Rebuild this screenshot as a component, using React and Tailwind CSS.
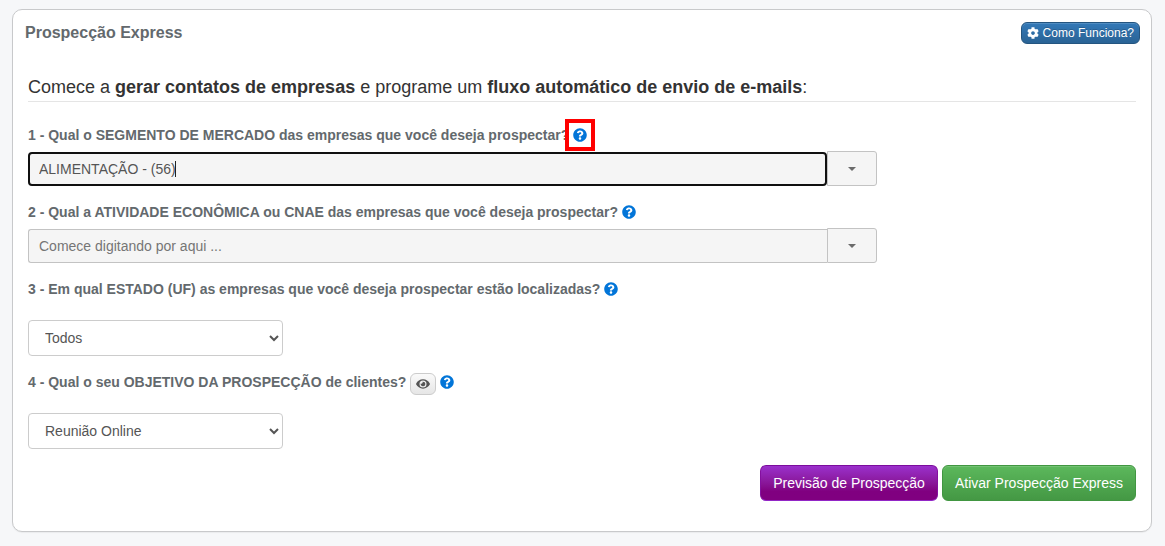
import { useState } from "react";
import { FaCog, FaEye, FaQuestionCircle } from "react-icons/fa";

function HelpButton({ label }) {
  return (
    <button type="button" aria-label={label} className="block shrink-0 text-[#0275d8]">
      <FaQuestionCircle size={14} />
    </button>
  );
}

function Caret() {
  return (
    <svg width="8" height="4" viewBox="0 0 8 4" aria-hidden="true">
      <path d="M0 0h8L4 4z" fill="#6b6b6b" />
    </svg>
  );
}

function Question({ htmlFor, children, help }) {
  return (
    <div className="flex h-5 items-center gap-1">
      <label htmlFor={htmlFor} className="font-bold text-[#63696d]">
        {children}
      </label>
      {help}
    </div>
  );
}

function ComboBox({ id, value, onChange, placeholder, active }) {
  return (
    <div className="mt-1.5 flex w-full max-w-[849px] items-end">
      <div className="relative min-w-0 grow">
        <input
          id={id}
          type="text"
          value={value}
          onChange={(e) => onChange(e.target.value)}
          placeholder={placeholder}
          className={
            active
              ? "block h-[34px] w-full rounded-[4px] border-2 border-[#101010] bg-[#f5f5f5] px-[9px] text-[#555555] outline-none"
              : "block h-[34px] w-full rounded-l-[3px] border border-r-0 border-[#c3c3c3] bg-[#f5f5f5] px-2.5 text-[#555555] outline-none placeholder:text-[#757575]"
          }
        />
        {active && <span className="absolute top-[9px] left-[147px] h-4 w-px bg-[#222222]" />}
      </div>
      <button
        type="button"
        aria-label="Abrir lista"
        className="flex h-[35px] w-[50px] shrink-0 items-center justify-center rounded-r-[3px] border border-[#c3c3c3] bg-[#f5f5f5]"
      >
        <Caret />
      </button>
    </div>
  );
}

function Select({ id, options }) {
  return (
    <select
      id={id}
      className="mt-[21px] block h-9 w-[255px] rounded-[4px] border border-[#cccccc] bg-white px-3 text-[#555555]"
    >
      {options.map((option) => (
        <option key={option}>{option}</option>
      ))}
    </select>
  );
}

export default function App() {
  const [segment, setSegment] = useState("ALIMENTAÇÃO - (56)");
  const [activity, setActivity] = useState("");

  return (
    <div className="min-h-screen bg-[#f6f7f9] px-3 pt-[9px] pb-3.5 font-['Liberation_Sans',Arial,sans-serif] text-sm">
      <main className="mr-px rounded-[10px] border border-[#c8c9cb] bg-white pb-[30px] shadow-[0_1px_1px_rgba(0,0,0,0.05)]">
        <header className="flex items-center justify-between pt-3 pr-[11px] pl-3">
          <h1 className="text-base leading-[22px] font-bold text-[#63696d]">Prospecção Express</h1>
          <button
            type="button"
            className="flex h-[22px] items-center gap-1 rounded-[6px] border border-[#245580] bg-linear-to-b from-[#3379b8] to-[#2a6395] px-[5px] text-xs text-white shadow-[inset_0_1px_0_rgba(255,255,255,0.15)] text-shadow-[0_-1px_0_rgba(0,0,0,0.2)]"
          >
            <FaCog size={12} />
            Como Funciona?
          </button>
        </header>

        <form className="px-[15px] pt-[31px]" onSubmit={(e) => e.preventDefault()}>
          <h2 className="border-b border-[#e5e5e5] pb-0.5 text-lg leading-6 text-[#333333]">
            Comece a <b>gerar contatos de empresas</b> e programe um{" "}
            <b>fluxo automático de envio de e-mails</b>:
          </h2>

          <div className="mt-[23px] flex flex-col gap-4">
            <div>
              <Question
                htmlFor="segmento"
                help={
                  <span className="relative">
                    <HelpButton label="Ajuda sobre segmento de mercado" />
                    <span className="pointer-events-none absolute -inset-x-2 -top-[9px] -bottom-[9px] border-4 border-[#ff0000]" />
                  </span>
                }
              >
                1 - Qual o SEGMENTO DE MERCADO das empresas que você deseja prospectar?
              </Question>
              <ComboBox id="segmento" value={segment} onChange={setSegment} active />
            </div>
            <div>
              <Question
                htmlFor="atividade"
                help={<HelpButton label="Ajuda sobre atividade econômica" />}
              >
                2 - Qual a ATIVIDADE ECONÔMICA ou CNAE das empresas que você deseja prospectar?
              </Question>
              <ComboBox
                id="atividade"
                value={activity}
                onChange={setActivity}
                placeholder="Comece digitando por aqui ..."
              />
            </div>
            <div>
              <Question htmlFor="estado" help={<HelpButton label="Ajuda sobre estado" />}>
                3 - Em qual ESTADO (UF) as empresas que você deseja prospectar estão localizadas?
              </Question>
              <Select id="estado" options={["Todos"]} />
            </div>
            <div>
              <Question
                htmlFor="objetivo"
                help={
                  <>
                    <button
                      type="button"
                      aria-label="Visualizar objetivo"
                      className="mt-1 flex h-[22px] w-[26px] items-center justify-center rounded-[6px] border border-[#cccccc] bg-linear-to-b from-[#fafafa] to-[#e6e6e6] text-[#555555]"
                    >
                      <FaEye size={14} />
                    </button>
                    <HelpButton label="Ajuda sobre objetivo da prospecção" />
                  </>
                }
              >
                4 - Qual o seu OBJETIVO DA PROSPECÇÃO de clientes?
              </Question>
              <Select id="objetivo" options={["Reunião Online"]} />
            </div>
          </div>

          <div className="mt-4 flex justify-end gap-1">
            <button
              type="button"
              className="h-9 rounded-[6px] border border-t-[#7b0c9c] border-x-[#84109f] border-b-[#9226c6] bg-linear-to-b from-[#9a30cc] to-[#800080] to-75% px-3 text-white"
            >
              Previsão de Prospecção
            </button>
            <button
              type="submit"
              className="h-9 rounded-[6px] border border-[#419641] bg-linear-to-b from-[#5cb85c] to-[#449844] px-3 text-white shadow-[inset_0_1px_0_rgba(255,255,255,0.15)]"
            >
              Ativar Prospecção Express
            </button>
          </div>
        </form>
      </main>
    </div>
  );
}
